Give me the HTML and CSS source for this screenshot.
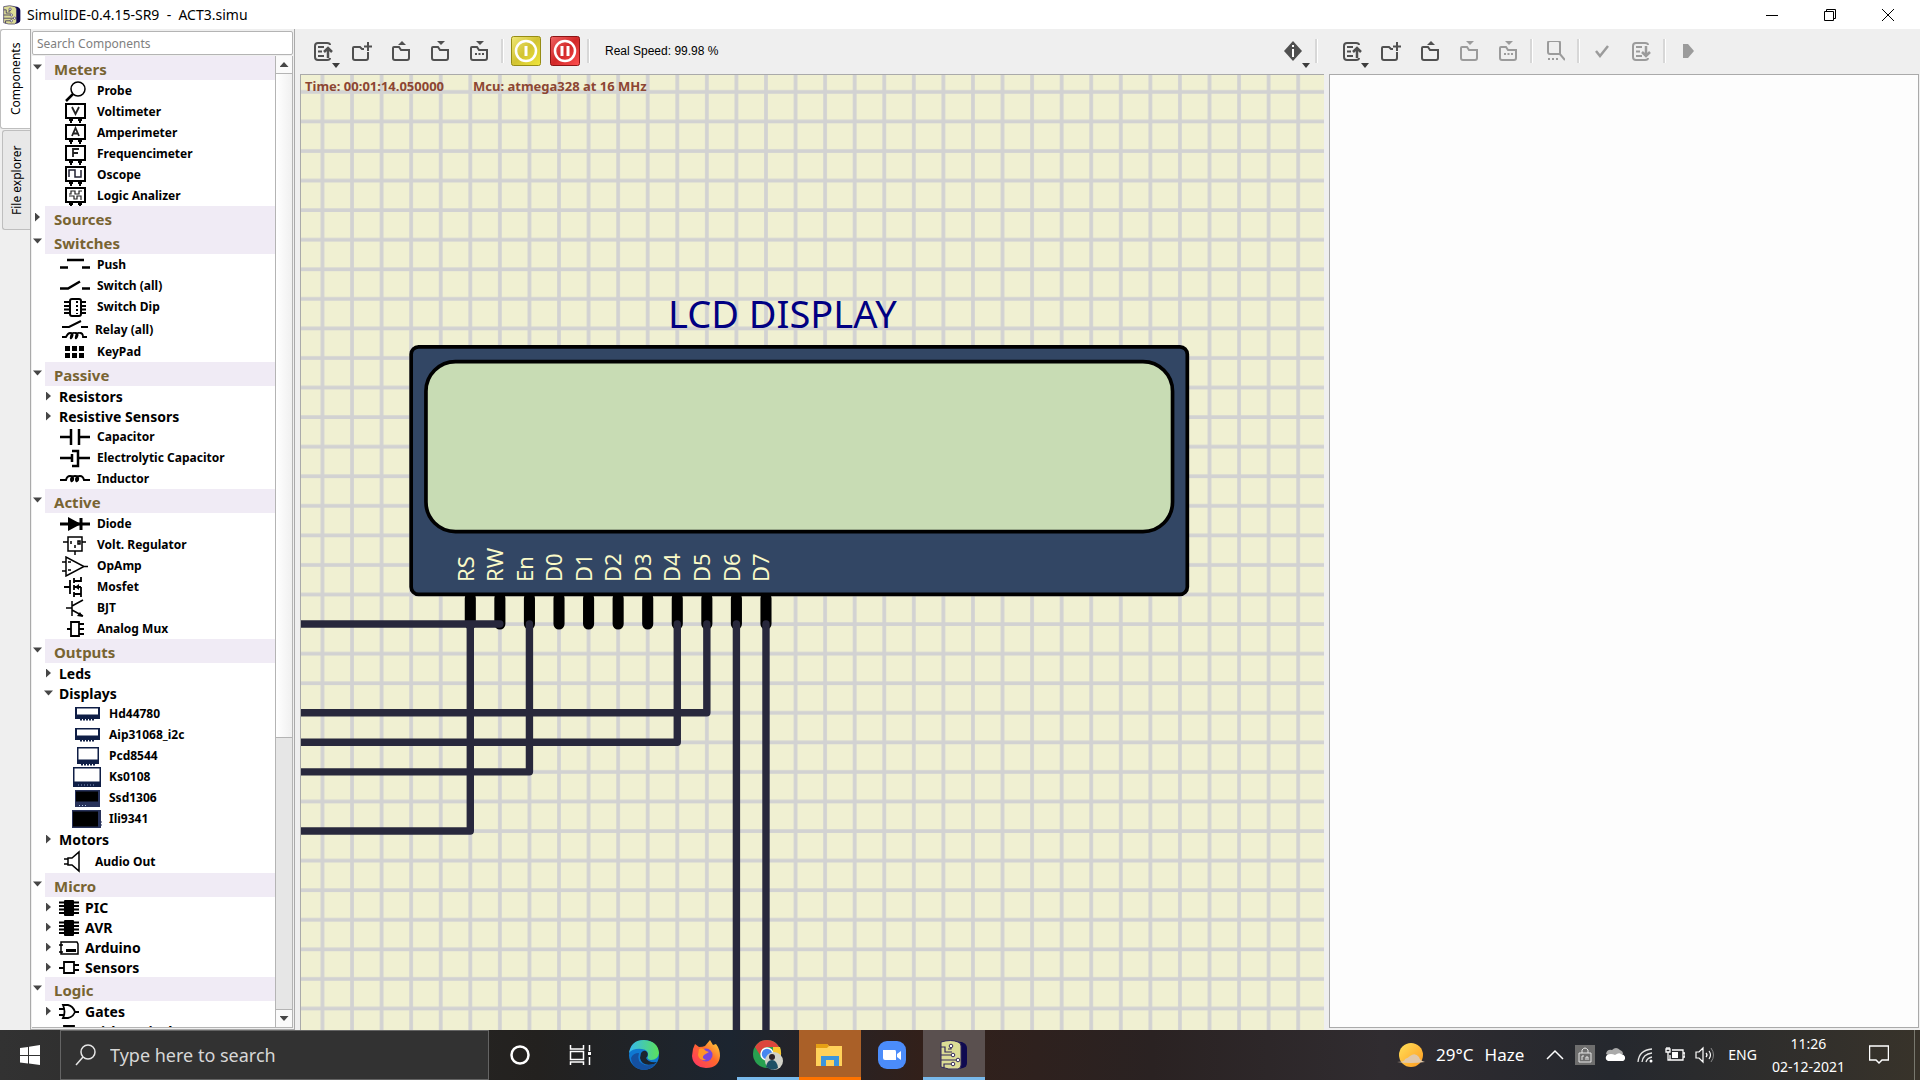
FILE: index.html
```html
<!DOCTYPE html>
<html lang="en">
<head>
<meta charset="utf-8">
<title>SimulIDE-0.4.15-SR9 - ACT3.simu</title>
<link rel="stylesheet" href="styles.css">
</head>
<body>
<svg class="defs" aria-hidden="true">
  <defs>
    <linearGradient id="gy" x1="0" y1="0" x2="1" y2="1"><stop offset="0" stop-color="#f0e878"/><stop offset=".5" stop-color="#d2c332"/><stop offset="1" stop-color="#f0e63c"/></linearGradient>
    <linearGradient id="gr" x1="0" y1="0" x2="1" y2="1"><stop offset="0" stop-color="#f06464"/><stop offset=".5" stop-color="#d22828"/><stop offset="1" stop-color="#ff5050"/></linearGradient>
    <linearGradient id="ge" x1="0" y1="0" x2="1" y2="0"><stop offset="0" stop-color="#35b8f0"/><stop offset="1" stop-color="#5be05a"/></linearGradient>
    <linearGradient id="gf" x1="0" y1="1" x2="1" y2="0"><stop offset="0" stop-color="#ff2d6b"/><stop offset=".55" stop-color="#ff6a2b"/><stop offset="1" stop-color="#ffe23c"/></linearGradient>
    <linearGradient id="gs" x1="0" y1="0" x2="1" y2="1"><stop offset="0" stop-color="#ffe05a"/><stop offset="1" stop-color="#ff9a1e"/></linearGradient>
    <symbol id="app" viewBox="0 0 28 30"><path d="M5 1l17 1q5 2 5 6v15q0 4-4 5l-4 1z" fill="#0f0a50"/><path d="M1 2q10-3 17 0 3 1 3 4v19q0 3-3 4-10 1-17-2z" fill="#dcdc96" stroke="#32285a"/><path d="M1 7h4v5h7M1 15h12M1 20h18M4 28v-4h8M11 6v3H8" fill="none" stroke="#32285a" stroke-width="1.200"/><g fill="#fff" stroke="#32285a"><circle cx="11" cy="6" r="1.800"/><circle cx="13" cy="15" r="1.800"/><circle cx="18" cy="20" r="1.800"/><circle cx="13" cy="24" r="1.800"/></g></symbol>

    <symbol id="probe" viewBox="0 0 30 21"><circle cx="18" cy="8" r="7" fill="none" stroke="#000" stroke-width="1.5"/><path d="M13 13l-7 7" stroke="#000" stroke-width="2.5"/></symbol>
    <symbol id="box" viewBox="0 0 30 21"><path d="M6 2h19v14H6z" fill="none" stroke="#000" stroke-width="2"/><path d="M9 17.500h4M18 17.500h4" stroke="#000" stroke-width="3"/><path d="M11 18v3M20 18v3" stroke="#000" stroke-width="2"/></symbol>
    <symbol id="volt" viewBox="0 0 30 21"><use href="#box"/><path d="M12 5l3.500 7L19 5" fill="none" stroke="#222" stroke-width="1.800"/></symbol>
    <symbol id="amp" viewBox="0 0 30 21"><use href="#box"/><path d="M12 13l3.500-8 3.500 8M13 10.500h5" fill="none" stroke="#222" stroke-width="1.800"/></symbol>
    <symbol id="freq" viewBox="0 0 30 21"><use href="#box"/><path d="M13 13V5h6M13 9h5" fill="none" stroke="#222" stroke-width="1.800"/></symbol>
    <symbol id="scope" viewBox="0 0 30 21"><use href="#box"/><path d="M9 12V5h6v7h6V5" fill="none" stroke="#223" stroke-width="1.500"/></symbol>
    <symbol id="logic" viewBox="0 0 30 21"><use href="#box"/><path d="M9 8h2V5h4v3h4V5h3M9 10h5v3h3v-3h4v4" fill="none" stroke="#222" stroke-width="1.200"/></symbol>
    <symbol id="push" viewBox="0 0 30 21"><path d="M7 5h17M0 12.500h8M22 12.500h8" stroke="#000" stroke-width="2.500"/></symbol>
    <symbol id="switch" viewBox="0 0 30 21"><path d="M0 12.500h8l12-7M22 12.500h8" fill="none" stroke="#000" stroke-width="2.500"/></symbol>
    <symbol id="dip" viewBox="0 0 30 21"><path d="M4 5h22M4 9h22M4 12.500h22M4 16h22" stroke="#000" stroke-width="1.800"/><rect x="10" y="2" width="11" height="17" rx="2" fill="#fff" stroke="#000" stroke-width="2"/><path d="M17 4v13" stroke="#000" stroke-width="2" stroke-dasharray="2 2"/></symbol>
    <symbol id="relay" viewBox="0 0 30 24"><path d="M2 9h7l12-6M21 9h7" fill="none" stroke="#000" stroke-width="2"/><path d="M2 19h4q2-4 4-4 4 0 2 4-2 3-1-1 1-4 4-3 4 0 2 4-2 3-1-1 1-4 4-3 3 0 3 4h4" fill="none" stroke="#000" stroke-width="1.800"/></symbol>
    <symbol id="keypad" viewBox="0 0 30 21"><path d="M5 6.500h19M5 13.500h19" stroke="#000" stroke-width="5" stroke-dasharray="5 2"/></symbol>
    <symbol id="cap" viewBox="0 0 30 21"><path d="M0 10h11M19 10h11M11 2v16M19 2v16" stroke="#000" stroke-width="2.500"/></symbol>
    <symbol id="ecap" viewBox="0 0 30 21"><path d="M0 10h12M18 10h12M12 6v8M12 3h6v15h-6" fill="none" stroke="#000" stroke-width="2.500"/></symbol>
    <symbol id="ind" viewBox="0 0 30 21"><path d="M0 11h6q1-4 4-4 4 0 3 4-2 3-2-1 1-3 4-3 4 0 3 4-2 3-2-1 1-3 4-3 3 0 4 4h6" fill="none" stroke="#000" stroke-width="2"/></symbol>
    <symbol id="diode" viewBox="0 0 30 21"><path d="M0 10h30M21 4v12" stroke="#000" stroke-width="3"/><path d="M8 3l13 7-13 7z"/></symbol>
    <symbol id="reg" viewBox="0 0 30 21"><path d="M8 2h14v14H8zM3 7h5M22 7h4M15 16v4M11 6v3M15 10v3M18 6h2v3h-2z" fill="none" stroke="#000" stroke-width="1.500"/></symbol>
    <symbol id="opamp" viewBox="0 0 30 21"><path d="M6 1v19l18-9.500zM2 6h4M2 15h4M24 10.500h4M8 6h3M8 14h3" fill="none" stroke="#000" stroke-width="1.500"/></symbol>
    <symbol id="mosfet" viewBox="0 0 30 21"><path d="M4 10h6M10 3v14M14 1v5M14 8v5M14 15v5M14 4h7V0M14 10h7M21 10v10M14 17h7" fill="none" stroke="#000" stroke-width="1.800"/><path d="M15 10l4-3v6z"/></symbol>
    <symbol id="bjt" viewBox="0 0 30 21"><path d="M6 10h6M12 3v15M12 8l11-6M12 12l11 6" fill="none" stroke="#000" stroke-width="1.500"/><path d="M23 19l-6-1 3-4z"/></symbol>
    <symbol id="mux" viewBox="0 0 30 21"><path d="M11 3h8v14h-8zM7 10h4M19 5h5M19 10h5M19 15h5" fill="none" stroke="#000" stroke-width="1.800"/></symbol>
    <symbol id="lcd" viewBox="0 0 30 21"><rect x="3" y="3" width="25" height="12" fill="#0f1e46"/><path d="M5 4.500h21v6H5z" fill="#fff"/><path d="M8 15.500h15" stroke="#0f1e46" stroke-width="2" stroke-dasharray="2 1"/></symbol>
    <symbol id="pcd" viewBox="0 0 30 21"><rect x="5" y="1" width="22" height="17" fill="#0f1e46"/><path d="M6.500 2.500h19v11h-19z" fill="#fff"/><path d="M9 18.500h14" stroke="#0f1e46" stroke-width="2" stroke-dasharray="2 1"/></symbol>
    <symbol id="ks" viewBox="0 0 30 21"><rect x="1" y="0" width="28" height="20" fill="#0f1e46"/><path d="M2.500 1.500h25v13h-25z" fill="#fff"/><path d="M6 18h18" stroke="#8fa0c8" stroke-dasharray="1 2"/></symbol>
    <symbol id="ssd" viewBox="0 0 30 21"><rect x="3" y="2" width="25" height="17" fill="#28325a"/><path d="M4 3.500h22v10H4z" fill="#000"/><path d="M7 17.500h9" stroke="#b4c8e6" stroke-dasharray="1 2"/></symbol>
    <symbol id="ili" viewBox="0 0 30 21"><rect x="0" y="1" width="29" height="18" fill="#28325a"/><path d="M1 2.500h25v15H1z" fill="#000"/><path d="M29 13h1M29 16h1" stroke="#28325a"/></symbol>
    <symbol id="audio" viewBox="0 0 30 24"><path d="M8 8h4l7-6v19l-7-6H8zM4 9h4M4 14h4" fill="none" stroke="#000" stroke-width="1.500"/></symbol>
    <symbol id="chip" viewBox="0 0 20 20"><path d="M0 4.500h20M0 8h20M0 11.500h20M0 15h20" stroke="#000" stroke-width="2"/><rect x="5" y="2" width="10" height="16" rx="1"/></symbol>
    <symbol id="ardu" viewBox="0 0 20 20"><path d="M2 4h16l1 2v10H2zM0 7h4M0 14h4" fill="none" stroke="#000" stroke-width="1.500"/><path d="M7 12.500h10" stroke="#000" stroke-width="3"/></symbol>
    <symbol id="sens" viewBox="0 0 20 20"><path d="M5 4h10v11H5zM0 10h5M15 7h5M15 12h5" fill="none" stroke="#000" stroke-width="1.800"/></symbol>
    <symbol id="gate" viewBox="0 0 20 20"><path d="M4 3h5q5 1 7 7-2 5-7 6H4q3-6 0-13zM0 7h5M0 13h5M16 10h4" fill="none" stroke="#000" stroke-width="1.800"/></symbol>

    <symbol id="file" viewBox="0 0 20 20"><path d="M17 4q0-2-3-2H5Q2 2 2 5v11q0 3 3 3h9q3 0 3-2M5 6h6M5 10.500h4M5 15h6" fill="none" stroke="currentColor" stroke-width="2"/></symbol>
    <symbol id="fileup" viewBox="0 0 20 20"><use href="#file"/><path d="M15 17V8M11 11l4-4 4 4" fill="none" stroke="currentColor" stroke-width="2.500"/></symbol>
    <symbol id="filedn" viewBox="0 0 20 20"><use href="#file"/><path d="M15 5v9M11 11l4 4 4-4" fill="none" stroke="currentColor" stroke-width="2.500"/></symbol>
    <symbol id="fold" viewBox="0 0 20 20"><path d="M2 17V7q0-1 1-1h5l2 3h8v8q0 2-2 2H4q-2 0-2-2z" fill="none" stroke="currentColor" stroke-width="2"/></symbol>
    <symbol id="new" viewBox="0 0 20 20"><path d="M12 8h-2L8 6H2q-1 0-1 1v10q0 2 2 2h11q2 0 2-2v-6M16 1v9M12 5.500h8" fill="none" stroke="currentColor" stroke-width="2"/></symbol>
    <symbol id="open" viewBox="0 0 20 20"><use href="#fold"/><path d="M7 4l4-4 4 4z" fill="currentColor"/></symbol>
    <symbol id="save" viewBox="0 0 20 20"><use href="#fold"/><path d="M7 0l4 4 4-4z" fill="currentColor"/></symbol>
    <symbol id="saveas" viewBox="0 0 20 20"><use href="#save"/><path d="M6 13h9" stroke="currentColor" stroke-width="2" stroke-dasharray="2 1.500"/></symbol>
    <symbol id="find" viewBox="0 0 20 20"><path d="M4 0h9q2 0 2 2v11H5q-2 0-2-2V2q0-2 2-2zM14 12l6 7" fill="none" stroke="currentColor" stroke-width="2"/><path d="M3 18h10" stroke="currentColor" stroke-width="2" stroke-dasharray="2 2"/></symbol>
    <symbol id="check" viewBox="0 0 20 20"><path d="M4 10l4 5 8-10" fill="none" stroke="currentColor" stroke-width="2.500"/></symbol>
    <symbol id="play" viewBox="0 0 20 20"><path d="M5 3h5l6 7-6 7H5z" fill="currentColor"/></symbol>
    <symbol id="info" viewBox="0 0 20 20"><path d="M10 0l9 10-9 10L1 10z" fill="currentColor"/><path d="M10 4v2M10 8v8" stroke="#fff" stroke-width="2"/></symbol>
  </defs>
</svg>

<header class="titlebar">
  <svg class="title-icon"><use href="#app"/></svg>
  <span class="title-text">SimulIDE-0.4.15-SR9  -  ACT3.simu</span>
  <button class="win" aria-label="Minimize"><svg viewBox="0 0 12 12"><path d="M0 6.500h12" stroke="#000"/></svg></button>
  <button class="win" aria-label="Restore"><svg viewBox="0 0 12 12"><path d="M.5 2.500h9v9h-9zM2.500 2.500v-2h9v9h-2" fill="none" stroke="#000"/></svg></button>
  <button class="win" aria-label="Close"><svg viewBox="0 0 12 12"><path d="M0 0l12 12M12 0L0 12" stroke="#000"/></svg></button>
</header>

<main class="work">
  <aside class="side">
    <nav class="tabs">
      <button class="tab active">Components</button>
      <button class="tab">File explorer</button>
    </nav>
    <div class="panel">
      <input class="search" type="text" placeholder="Search Components" aria-label="Search Components">
      <div class="treebox">
        <ul class="tree">
          <li class="head"><i class="tri down"></i><button>Meters</button></li>
          <li class="item"><svg><use href="#probe"/></svg>Probe</li>
          <li class="item"><svg><use href="#volt"/></svg>Voltimeter</li>
          <li class="item"><svg><use href="#amp"/></svg>Amperimeter</li>
          <li class="item"><svg><use href="#freq"/></svg>Frequencimeter</li>
          <li class="item"><svg><use href="#scope"/></svg>Oscope</li>
          <li class="item"><svg><use href="#logic"/></svg>Logic Analizer</li>
          <li class="head"><i class="tri right"></i><button>Sources</button></li>
          <li class="head"><i class="tri down"></i><button>Switches</button></li>
          <li class="item"><svg><use href="#push"/></svg>Push</li>
          <li class="item"><svg><use href="#switch"/></svg>Switch (all)</li>
          <li class="item"><svg><use href="#dip"/></svg>Switch Dip</li>
          <li class="item tall"><svg><use href="#relay"/></svg>Relay (all)</li>
          <li class="item"><svg><use href="#keypad"/></svg>KeyPad</li>
          <li class="head"><i class="tri down"></i><button>Passive</button></li>
          <li class="sub"><i class="tri right"></i><button>Resistors</button></li>
          <li class="sub"><i class="tri right"></i><button>Resistive Sensors</button></li>
          <li class="item"><svg><use href="#cap"/></svg>Capacitor</li>
          <li class="item"><svg><use href="#ecap"/></svg>Electrolytic Capacitor</li>
          <li class="item"><svg><use href="#ind"/></svg>Inductor</li>
          <li class="head"><i class="tri down"></i><button>Active</button></li>
          <li class="item"><svg><use href="#diode"/></svg>Diode</li>
          <li class="item"><svg><use href="#reg"/></svg>Volt. Regulator</li>
          <li class="item"><svg><use href="#opamp"/></svg>OpAmp</li>
          <li class="item"><svg><use href="#mosfet"/></svg>Mosfet</li>
          <li class="item"><svg><use href="#bjt"/></svg>BJT</li>
          <li class="item"><svg><use href="#mux"/></svg>Analog Mux</li>
          <li class="head"><i class="tri down"></i><button>Outputs</button></li>
          <li class="sub"><i class="tri right"></i><button>Leds</button></li>
          <li class="sub"><i class="tri down"></i><button>Displays</button></li>
          <li class="item deep"><svg><use href="#lcd"/></svg>Hd44780</li>
          <li class="item deep"><svg><use href="#lcd"/></svg>Aip31068_i2c</li>
          <li class="item deep"><svg><use href="#pcd"/></svg>Pcd8544</li>
          <li class="item deep"><svg><use href="#ks"/></svg>Ks0108</li>
          <li class="item deep"><svg><use href="#ssd"/></svg>Ssd1306</li>
          <li class="item deep"><svg><use href="#ili"/></svg>Ili9341</li>
          <li class="sub"><i class="tri right"></i><button>Motors</button></li>
          <li class="item tall"><svg><use href="#audio"/></svg>Audio Out</li>
          <li class="head"><i class="tri down"></i><button>Micro</button></li>
          <li class="sub"><i class="tri right"></i><button><svg><use href="#chip"/></svg>PIC</button></li>
          <li class="sub"><i class="tri right"></i><button><svg><use href="#chip"/></svg>AVR</button></li>
          <li class="sub"><i class="tri right"></i><button><svg><use href="#ardu"/></svg>Arduino</button></li>
          <li class="sub"><i class="tri right"></i><button><svg><use href="#sens"/></svg>Sensors</button></li>
          <li class="head"><i class="tri down"></i><button>Logic</button></li>
          <li class="sub"><i class="tri right"></i><button><svg><use href="#gate"/></svg>Gates</button></li>
          <li class="sub"><i class="tri right"></i><button><svg><use href="#sens"/></svg>Arithmetical</button></li>
        </ul>
        <div class="scroll">
          <button aria-label="Scroll up"><i class="tri up"></i></button>
          <div class="track"><div class="thumb"></div></div>
          <button aria-label="Scroll down"><i class="tri down"></i></button>
        </div>
      </div>
    </div>
  </aside>

  <section class="pane circuit">
    <div class="toolbar">
      <button class="tool menu" aria-label="Recent circuits"><svg><use href="#fileup"/></svg></button>
      <button class="tool" aria-label="New circuit"><svg><use href="#new"/></svg></button>
      <button class="tool" aria-label="Open circuit"><svg><use href="#open"/></svg></button>
      <button class="tool" aria-label="Save circuit"><svg><use href="#save"/></svg></button>
      <button class="tool" aria-label="Save circuit as"><svg><use href="#saveas"/></svg></button>
      <i class="sep"></i>
      <button class="tool big" aria-label="Power circuit"><svg viewBox="0 0 30 30"><rect x=".5" y=".5" width="29" height="29" rx="2" fill="url(#gy)" stroke="#968c14"/><circle cx="15" cy="15" r="10" fill="none" stroke="#fff" stroke-width="2.500"/><path d="M15 10v10" stroke="#fff" stroke-width="3"/></svg></button>
      <button class="tool big" aria-label="Pause simulation"><svg viewBox="0 0 30 30"><rect x=".5" y=".5" width="29" height="29" rx="2" fill="url(#gr)" stroke="#8c1414"/><circle cx="15" cy="15" r="10" fill="none" stroke="#fff" stroke-width="2.500"/><path d="M12 10v10M18 10v10" stroke="#fff" stroke-width="3"/></svg></button>
      <i class="sep"></i>
      <span class="speed">Real Speed: 99.98 %</span>
      <button class="tool menu" aria-label="Information"><svg><use href="#info"/></svg></button>
      <i class="sep"></i>
    </div>
    <svg class="canvas" role="img" aria-label="LCD display wired to a microcontroller">
      <defs>
        <pattern id="grid" x="-4" y="-4" width="8" height="8" patternUnits="userSpaceOnUse" patternTransform="translate(169.3 549) scale(3.696)">
          <path d="M4 0v8M0 4h8" stroke="#d2d2d2" fill="none"/>
        </pattern>
      </defs>
      <rect width="100%" height="100%" fill="#f0f0d2"/>
      <rect width="100%" height="100%" fill="url(#grid)"/>
      <g transform="translate(169.3 549) scale(3.696)">
        <path class="pins" d="M0-7V0M8-7V0M16-7V0M24-7V0M32-7V0M40-7V0M48-7V0M56-7V0M64-7V0M72-7V0M80-7V0"/>
        <rect class="lcd-body" x="-16" y="-75" width="210" height="67" rx="2"/>
        <rect class="lcd-glass" x="-12" y="-71" width="202" height="46" rx="8"/>
        <path class="wires" d="M-60 0H8M0 0V56H-60M16 0V40H-60M56 0V32H-60M64 0V24H-60M72 0V400M80 0V400"/>
      </g>
      <text class="lcd-title" x="367" y="253">LCD DISPLAY</text>
      <g class="pin-names" transform="translate(173 507) rotate(-90)">
        <text y="0">RS</text><text y="29">RW</text><text y="59">En</text><text y="88">D0</text><text y="118">D1</text><text y="147">D2</text><text y="177">D3</text><text y="206">D4</text><text y="236">D5</text><text y="266">D6</text><text y="295">D7</text>
      </g>
      <g class="status"><text x="4" y="16">Time: 00:01:14.050000</text><text x="172" y="16">Mcu: atmega328 at 16 MHz</text></g>
    </svg>
  </section>

  <section class="pane editor">
    <div class="toolbar">
      <button class="tool menu" aria-label="Recent files"><svg><use href="#fileup"/></svg></button>
      <button class="tool" aria-label="New file"><svg><use href="#new"/></svg></button>
      <button class="tool" aria-label="Open file"><svg><use href="#open"/></svg></button>
      <button class="tool" disabled aria-label="Save file"><svg><use href="#save"/></svg></button>
      <button class="tool" disabled aria-label="Save file as"><svg><use href="#saveas"/></svg></button>
      <i class="sep"></i>
      <button class="tool" disabled aria-label="Find"><svg><use href="#find"/></svg></button>
      <i class="sep"></i>
      <button class="tool" disabled aria-label="Compile"><svg><use href="#check"/></svg></button>
      <button class="tool" disabled aria-label="Upload"><svg><use href="#filedn"/></svg></button>
      <i class="sep"></i>
      <button class="tool" disabled aria-label="Debug"><svg><use href="#play"/></svg></button>
    </div>
    <div class="page"></div>
  </section>
</main>

<footer class="taskbar">
  <button class="start" aria-label="Start"><svg viewBox="0 0 20 20"><path d="M0 3l8-1v8H0zM9 1.800L20 0v10H9zM0 11h8v7.500l-8-1zM9 11h11v9L9 18.500z" fill="#fff"/></svg></button>
  <label class="find"><svg viewBox="0 0 22 22"><circle cx="13" cy="8" r="7" fill="none" stroke="#e6e6e6" stroke-width="1.500"/><path d="M8 13l-7 8" stroke="#e6e6e6" stroke-width="1.500"/></svg><input type="text" placeholder="Type here to search" aria-label="Type here to search"></label>
  <div class="apps">
    <button class="app" aria-label="Cortana"><svg viewBox="0 0 30 30"><circle cx="15" cy="15" r="8.500" fill="none" stroke="#fff" stroke-width="2.500"/></svg></button>
    <button class="app" aria-label="Task view"><svg viewBox="0 0 30 30"><path d="M3.500 5v4h13V5M3.500 11.500h13v8h-13zM3.500 25v-3h13v3M22.500 5v6M22.500 17v8" fill="none" stroke="#fff" stroke-width="1.500"/><path d="M21 12h3v3h-3z" fill="#fff"/></svg></button>
    <button class="app" aria-label="Edge"><svg viewBox="0 0 30 30"><circle cx="15" cy="15" r="15" fill="#0f78d2"/><path d="M0 13Q2 0 15 0q14 1 15 13-1 7-8 7-5-1-3-4 1-6-6-7Q4 8 0 13z" fill="url(#ge)"/><path d="M10 13q-3 9 6 12 6 1 11-2-5 7-12 7-12-1-13-12 2-5 8-5z" fill="#1450a0"/><path d="M12 13q3-4 6-1 2 3-1 6 2 5 11 4l-3 2q-12 3-14-6z" fill="#1c2530"/></svg></button>
    <button class="app" aria-label="Firefox"><svg viewBox="0 0 30 30"><path d="M2 9l2-5 4 3q4 0 6-1l5-6 3 5 3-1q4 5 4 12-1 12-14 12Q2 27 1 16z" fill="url(#gf)"/><circle cx="15" cy="15" r="6.500" fill="#7846dc"/><path d="M8 9q4-2 7 2l3 1-5 3q-3 3 2 5-7 1-8-5z" fill="#ff9628"/></svg></button>
    <button class="app run" aria-label="Chrome"><svg viewBox="0 0 30 30"><circle cx="14" cy="14" r="14" fill="#28a050"/><path d="M2 7Q6 0 14 0t12 7H14q-6 1-7 8z" fill="#dc463c"/><path d="M27 7q4 12-6 19l-7 2 6-12V7z" fill="#fac832"/><circle cx="14" cy="14" r="6" fill="#4687f0" stroke="#fff" stroke-width="1.500"/><circle cx="21" cy="21" r="9" fill="#d2d2c8"/><circle cx="19" cy="17" r="3" fill="#2d2328"/><path d="M13 27q1-7 6-7t6 8q-5 4-12-1z" fill="#1e5064"/></svg></button>
    <button class="app files" aria-label="File Explorer"><svg viewBox="0 0 30 30"><path d="M1 4h11l2 2h13v20H1z" fill="#ffd25a"/><path d="M1 4h11l2 2-2 2H1z" fill="#e6a014"/><path d="M6 26V16h18v10h-5v-6h-8v6z" fill="#3c96dc"/></svg></button>
    <button class="app" aria-label="Zoom"><svg viewBox="0 0 30 30"><rect x="1" y="1" width="28" height="28" rx="9" fill="#4b8cfa"/><path d="M6 10h12q1 0 1 2v8H8q-2 0-2-2zM20 14l4-3v9l-4-3z" fill="#fff"/></svg></button>
    <button class="app run on" aria-label="SimulIDE"><svg><use href="#app"/></svg></button>
  </div>
  <div class="tray">
    <button class="weather"><svg viewBox="0 0 28 26"><circle cx="14" cy="13" r="12" fill="url(#gs)"/><path d="M0 20q8 0 8-3 3-1 5-3 5-4 9 1 1 4 6 5-14 2-28 0z" fill="#e1c8aa"/></svg><span>29°C</span><span>Haze</span></button>
    <svg class="ti" viewBox="0 0 20 20"><path d="M2 14l8-8 8 8" fill="none" stroke="#fff" stroke-width="1.500"/></svg>
    <svg class="ti" viewBox="0 0 20 20"><rect width="20" height="20" fill="#6e6e6e"/><path d="M4 8h12v9H4zM7 8V5q3-4 6 0v3M7 15v-4h2M11 15v-3h2v3" fill="none" stroke="#e6e6e6"/></svg>
    <svg class="ti" viewBox="0 0 20 20"><path d="M1 9q1-5 6-4 4-4 8 0 3 1 3 4l-8 4z" fill="#aaa"/><path d="M3 16q-4-2-1-6 4-2 8 0 4-3 6-1 5 1 4 5-1 2-2 2z" fill="#fff"/></svg>
    <svg class="ti" viewBox="0 0 20 20"><path d="M3 17Q4 5 17 4M7 17Q8 9 17 8M11 17q1-4 6-5" fill="none" stroke="#e6e6e6" stroke-width="1.300"/><circle cx="16" cy="16" r="1.500" fill="#fff"/></svg>
    <svg class="ti" viewBox="0 0 20 20"><path d="M5 10v5h13V5H7M18 8h2v4h-2M1 4v3h4V4zM3 7v8h2M2 2v2M4 2v2" fill="none" stroke="#fff" stroke-width="1.300"/><path d="M7 7h6v6H7z" fill="#fff"/></svg>
    <svg class="ti" viewBox="0 0 20 20"><path d="M1 7h3l4-4v14l-4-4H1zM11 8q2 2 0 4M14 6q3 4 0 8" fill="none" stroke="#fff" stroke-width="1.200"/><path d="M16 3q5 7 0 14" fill="none" stroke="#888"/></svg>
    <span class="lang">ENG</span>
    <div class="clock"><time>11:26</time><time>02-12-2021</time></div>
    <button class="note" aria-label="Notifications"><svg viewBox="0 0 20 20"><path d="M.5 1h19v14H13l-3 3-3-3H.5z" fill="none" stroke="#fff" stroke-width="1.500"/></svg></button>
  </div>
  <button class="desk" aria-label="Show desktop"></button>
</footer>
</body>
</html>
```

FILE: styles.css
```css
* { box-sizing: border-box; }
body {
  margin: 0;
  height: 100vh;
  display: flex;
  flex-direction: column;
  overflow: hidden;
  background: #efefef;
  color: #000;
  font: 12px/16px "Noto Sans", "Open Sans", sans-serif;
}
button { margin: 0; padding: 0; border: 0; background: none; color: inherit; font: inherit; }
ul { margin: 0; padding: 0; list-style: none; }
svg { display: block; flex: none; }
.defs { position: absolute; width: 0; height: 0; }

/* title bar */
.titlebar { flex: none; display: flex; align-items: center; height: 29px; padding-right: 3px; background: #fff; }
.title-icon { width: 18px; height: 20px; margin: 0 6px 0 3px; }
.title-text { flex: 1; white-space: pre; font-size: 14px; }
.win { width: 58px; height: 29px; display: flex; align-items: center; justify-content: center; }
.win svg { width: 12px; height: 12px; }

/* work area */
.work { flex: 1; min-height: 0; display: grid; grid-template-columns: 295px minmax(0, 1029fr) minmax(0, 596fr); }
.side { display: flex; min-height: 0; }
.tabs { width: 30px; display: flex; flex-direction: column; align-items: flex-end; }
.tab {
  width: 28px;
  height: 100px;
  margin-bottom: 1px;
  writing-mode: vertical-rl;
  transform: rotate(180deg);
  border: 1px solid #bebebe;
  border-left: 0;
  border-radius: 0 3px 3px 0;
  background: #e8e8e8;
  text-align: center;
}
.tab.active { width: 30px; background: #fff; }
.panel { flex: 1; min-width: 0; display: flex; flex-direction: column; padding: 2px 1px 1px; border: 1px solid #aaa; border-width: 0 1px 1px; }
.search { flex: none; height: 24px; padding: 0 4px; border: 1px solid #b4b4b4; border-radius: 2px; background: #fff; font: inherit; }
.search::placeholder { color: #808080; opacity: 1; }
.treebox { flex: 1; min-height: 0; display: flex; margin-top: 1px; border: 1px solid #b4b4b4; border-width: 0 1px 1px 0; background: #fff; }
.tree { flex: 1; min-width: 0; overflow: hidden; font-weight: 700; }
.tree li { display: flex; align-items: center; white-space: nowrap; }
.head { height: 24px; color: #786432; font-size: 15px; }
.head button { flex: 1; height: 24px; padding: 2px 10px 0 9px; background: #f0ebf5; text-align: left; }
.head .tri { margin: 0 3px 2px 1px; }
.sub { height: 20px; padding-left: 12px; font-size: 14px; }
.sub .tri { margin: 0 6px 0 0; }
.sub button { display: flex; align-items: center; padding-top: 1px; }
.sub svg { width: 20px; height: 20px; margin-right: 6px; }
.item { height: 21px; padding: 1px 0 0 28px; }
.item svg { width: 30px; height: 21px; margin-right: 7px; }
.item.tall { height: 24px; padding-top: 2px; }
.item.tall svg { height: 24px; margin-right: 5px; }
.item.deep { padding-left: 40px; }

.tri { flex: none; width: 9px; height: 9px; background: #464646; }
.tri.down { clip-path: polygon(0 22%, 100% 22%, 50% 78%); }
.tri.up { clip-path: polygon(0 78%, 100% 78%, 50% 22%); }
.tri.right { clip-path: polygon(22% 0, 78% 50%, 22% 100%); }

.scroll { width: 17px; display: flex; flex-direction: column; border-left: 1px solid #b4b4b4; }
.scroll button { height: 17px; display: flex; align-items: center; justify-content: center; background: #fafafa; }
.track { flex: 1; background: #e6e6e6; border: 1px solid #b4b4b4; border-width: 1px 0; }
.thumb { height: 71%; background: linear-gradient(90deg, #fff, #f0f0f0); border-bottom: 1px solid #b4b4b4; }

.pane { display: flex; flex-direction: column; min-width: 0; min-height: 0; }
.circuit { padding-left: 5px; }
.editor { padding: 0 1px 2px 5px; }
.toolbar { flex: none; height: 45px; display: flex; align-items: center; padding: 0 4px 2px 3px; }
.tool { position: relative; width: 39px; height: 34px; display: flex; align-items: center; justify-content: center; color: #505050; }
.tool svg { width: 20px; height: 20px; }
.tool:disabled { color: #9b9b9b; }
.tool.big svg { width: 30px; height: 30px; }
.tool.menu::after { content: ""; position: absolute; right: 2px; bottom: 0; border: 4px solid transparent; border-top: 5px solid #3c3c3c; border-bottom: 0; }
.sep { width: 8px; height: 24px; display: flex; justify-content: center; }
.sep::before { content: ""; width: 2px; background: #d7d7d7; border-right: 1px solid #fff; }
.speed { flex: 1; padding-left: 13px; font: 12px/16px "Liberation Sans", Arial, sans-serif; }
.editor .toolbar { padding-left: 3px; }
.canvas { flex: 1; min-height: 0; width: 100%; border: 1px solid #aaa; border-width: 1px 0 0 1px; }
.page { flex: 1; border: 1px solid #aaa; background: #fdfdfd; }

.pins { fill: none; stroke: #000; stroke-width: 3; stroke-linecap: round; }
.lcd-body { fill: #324664; stroke: #000; }
.lcd-glass { fill: #c8dcb4; stroke: #000; }
.wires { fill: none; stroke: #28283c; stroke-width: 2; stroke-linecap: round; stroke-linejoin: round; }
.lcd-title { font-size: 38px; fill: #000082; }
.pin-names { font-size: 22px; fill: #fafac8; }
.status { font-size: 13px; font-weight: 700; fill: #8c4632; }

/* taskbar */
.taskbar { flex: none; height: 50px; display: flex; background: linear-gradient(90deg, #323232, #23211f 28%, #1c2530 38%, #32201a 48%, #2a2222 60%, #302c30 72%, #25282e 84%, #38332a); color: #fff; }
.start { width: 60px; display: flex; align-items: center; justify-content: center; }
.start svg { width: 20px; height: 20px; }
.find { width: 429px; display: flex; align-items: center; gap: 13px; padding-left: 14px; border: 1px solid #646464; background: #323232; }
.find svg { width: 22px; height: 22px; }
.find input { flex: 1; min-width: 0; padding: 0; border: 0; background: none; color: #fff; font: 18px/24px "Noto Sans", sans-serif; }
.find input::placeholder { color: #d7d7d7; opacity: 1; }
.apps { display: flex; }
.app { width: 62px; display: flex; align-items: center; justify-content: center; border-bottom: 3px solid transparent; padding-top: 3px; }
.app svg { width: 30px; height: 30px; }
.app.run { border-bottom-color: #78b9eb; }
.app.on { background: #5a504f; }
.app.files { background: #aa6028; border-bottom-color: #ff7300; }
.tray { flex: 1; display: flex; align-items: center; justify-content: flex-end; gap: 10px; padding-right: 25px; }
.weather { display: flex; align-items: center; gap: 11px; margin-right: 11px; font-size: 17px; }
.weather svg { width: 28px; height: 26px; }
.ti { width: 20px; height: 20px; }
.lang { margin: 0 5px 0 3px; font-size: 14px; }
.clock { display: flex; flex-direction: column; align-items: center; gap: 7px; font-size: 14px; }
.note { margin-left: 14px; }
.note svg { width: 20px; height: 20px; }
.desk { width: 6px; border-left: 1px solid #78786e; }
```
